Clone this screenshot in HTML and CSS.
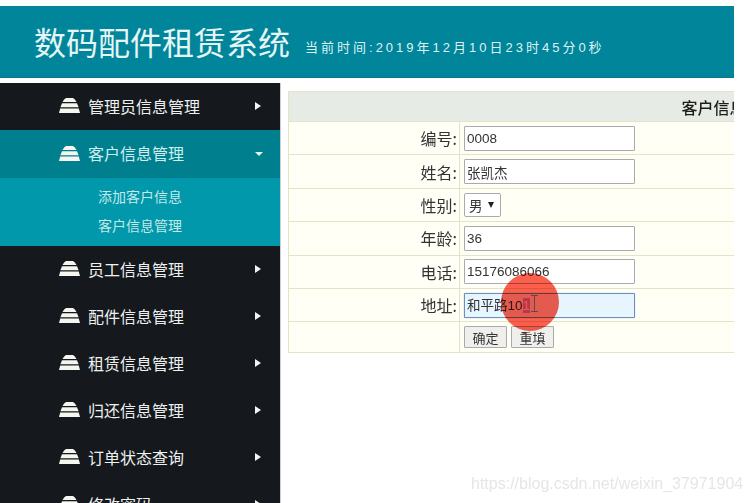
FILE: index.html
```html
<!DOCTYPE html>
<html lang="zh-CN">
<head>
    <meta charset="UTF-8">
    <title>数码配件租赁系统</title>
    <link rel="stylesheet" href="styles.css">
</head>
<body>
    <!-- shared icon -->
    <svg class="defs" width="0" height="0">
        <symbol id="stack" viewBox="0 0 21 15">
            <path d="M7 0H14Q16 1 17.5 4H3.5Q5 1 7 0Z"/>
            <path d="M3 5.2H18L19.6 9.2H1.4Z"/>
            <path d="M1.2 10.4H19.8L21 15H0Z"/>
        </symbol>
    </svg>

    <div class="page">
        <!-- Header -->
        <header class="top">
            <h1>数码配件租赁系统</h1>
            <span class="clock">当前时间:2019年12月10日23时45分0秒</span>
        </header>

        <div class="content">
            <!-- Side menu -->
            <nav class="menu">
                <a class="menu-item"><svg class="stack"><use href="#stack"/></svg><span>管理员信息管理</span><i class="arrow"></i></a>
                <a class="menu-item active"><svg class="stack"><use href="#stack"/></svg><span>客户信息管理</span><i class="arrow-down"></i></a>
                <div class="submenu">
                    <a>添加客户信息</a>
                    <a>客户信息管理</a>
                </div>
                <a class="menu-item"><svg class="stack"><use href="#stack"/></svg><span>员工信息管理</span><i class="arrow"></i></a>
                <a class="menu-item"><svg class="stack"><use href="#stack"/></svg><span>配件信息管理</span><i class="arrow"></i></a>
                <a class="menu-item"><svg class="stack"><use href="#stack"/></svg><span>租赁信息管理</span><i class="arrow"></i></a>
                <a class="menu-item"><svg class="stack"><use href="#stack"/></svg><span>归还信息管理</span><i class="arrow"></i></a>
                <a class="menu-item"><svg class="stack"><use href="#stack"/></svg><span>订单状态查询</span><i class="arrow"></i></a>
                <a class="menu-item"><svg class="stack"><use href="#stack"/></svg><span>修改密码</span><i class="arrow"></i></a>
            </nav>

            <!-- Customer form -->
            <main class="main">
                <table class="form-table">
                    <colgroup><col class="col-label"><col></colgroup>
                    <tr><th colspan="2" class="title">客户信息修改</th></tr>
                    <tr><td class="label">编号:</td><td><input class="field" type="text" value="0008"></td></tr>
                    <tr><td class="label">姓名:</td><td><input class="field" type="text" value="张凯杰"></td></tr>
                    <tr><td class="label">性别:</td><td><span class="select">男<i class="select-arrow"></i></span></td></tr>
                    <tr><td class="label">年龄:</td><td><input class="field" type="text" value="36"></td></tr>
                    <tr><td class="label">电话:</td><td><input class="field" type="text" value="15176086066"></td></tr>
                    <tr><td class="label">地址:</td><td><div class="field focused">和平路10<span class="picked">1</span></div></td></tr>
                    <tr class="last"><td class="label"></td><td><button class="btn">确定</button><button class="btn">重填</button></td></tr>
                </table>
                <!-- screen recorder click marker -->
                <div class="click-mark"></div>
                <svg class="ibeam" width="9" height="17" viewBox="0 0 9 17"><path d="M1 .5H8M4.5 .5V16.5M1 16.5H8" fill="none" stroke="#5a4a4a"/></svg>
            </main>
        </div>
    </div>

    <div class="watermark">https://blog.csdn.net/weixin_37971904</div>
</body>
</html>
```

FILE: styles.css
```css
/* Basic Reset */
* {
    margin: 0;
    padding: 0;
    box-sizing: border-box;
}

html, body {
    height: 503px;
    overflow: hidden;
}

body {
    position: relative;
    background-color: #fff;
    font-family: "Liberation Sans", "Noto Sans CJK SC", sans-serif;
    color: #222;
}

.defs {
    position: absolute;
}

/* the source is a video frame, so everything is a little soft */
.page {
    width: 734px;
    padding-top: 6px;
    filter: blur(0.35px);
}

/* Header */
.top {
    height: 72px;
    display: flex;
    align-items: center;
    padding-left: 34px;
    background-color: #00859a;
    border-bottom: 1px solid #0a7889;
    color: #dff3f3;
}

.top h1 {
    font-family: "Noto Sans CJK SC", sans-serif;
    font-size: 32px;
    font-weight: 400;
    margin-top: -2px;
    color: #e6f5f5;
}

.clock {
    margin-left: 15px;
    margin-top: 9px;
    font-size: 13px;
    letter-spacing: 3px;
}

.content {
    display: flex;
    margin-top: 5px;
    height: 420px;
}

/* Side menu */
.menu {
    width: 281px;
    flex-shrink: 0;
    background-color: #15191d;
    border-right: 1px solid #c9cfcf;
    overflow: hidden;
    font-family: "Noto Sans CJK SC", sans-serif;
}

.menu-item {
    height: 47px;
    display: flex;
    align-items: center;
    padding-left: 59px;
    padding-right: 19px;
    padding-bottom: 2px;
    font-size: 16px;
    color: #eef0ef;
}

.menu-item.active {
    height: 48px;
    background-color: #00808f;
    color: #cfeeee;
}

.stack {
    width: 21px;
    height: 15px;
    margin-right: 8px;
    fill: #f4f6ef;
}

.arrow {
    margin-left: auto;
    border-left: 6px solid #f4f6f4;
    border-top: 4.5px solid transparent;
    border-bottom: 4.5px solid transparent;
}

.arrow-down {
    margin-left: auto;
    margin-right: -2px;
    margin-top: 2px;
    border-top: 4px solid #e4f4f4;
    border-left: 4px solid transparent;
    border-right: 4px solid transparent;
}

.submenu {
    height: 68px;
    padding-top: 4px;
    background-color: #0098aa;
    text-align: center;
    font-size: 14px;
    color: #c5e8e8;
}

.submenu a {
    display: block;
    height: 29px;
    line-height: 29px;
}

/* Main form */
.main {
    position: relative;
    flex: 1;
    padding: 8px 0 0 7px;
    overflow: hidden;
}

.form-table {
    width: 882px;
    border-collapse: collapse;
    table-layout: fixed;
    background-color: #fffff6;
    border: 1px solid #e2e4c8;
}

.col-label {
    width: 171px;
}

.form-table td, .form-table th {
    border: 1px solid #e2e4c8;
    height: 33.4px;
    padding: 0 3px 0 4px;
    font-weight: 400;
}

.form-table .title {
    height: 30px;
    background-color: #e7ebe5;
    text-align: center;
    font-family: "Noto Sans CJK SC", sans-serif;
    font-size: 16px;
    font-weight: 500;
    color: #1c1c1c;
}

.form-table .last td {
    height: 31px;
}

.form-table .label {
    padding-right: 2px;
    text-align: right;
    font-family: "Noto Sans CJK SC", sans-serif;
    font-size: 16px;
    color: #333;
}

.field {
    display: block;
    width: 171px;
    height: 25px;
    padding: 0 2px;
    border: 1px solid #aaa;
    border-radius: 1px;
    background-color: #fff;
    font-family: "Liberation Sans", "Noto Sans CJK SC", sans-serif;
    font-size: 13.5px;
    line-height: 23px;
    color: #333;
}

.focused {
    border: 1px solid #6b8fc0;
    background-color: #e6f5ff;
    box-shadow: 0 0 1px #6b8fc0;
}

/* sits under the multiply circle, so it is lighter than it ends up */
.picked {
    background-color: #b49bff;
    color: #ffd8ff;
}

.select {
    display: inline-flex;
    align-items: center;
    width: 37px;
    height: 24px;
    padding-left: 4px;
    border: 1px solid #aaa;
    border-radius: 2px;
    background-color: #fff;
    font-family: "Noto Sans CJK SC", sans-serif;
    font-size: 13.5px;
    color: #333;
    vertical-align: middle;
}

.select-arrow {
    margin-left: 5px;
    border-top: 6px solid #222;
    border-left: 3px solid transparent;
    border-right: 3px solid transparent;
}

.btn {
    width: 43px;
    height: 22px;
    margin-right: 4px;
    border: 1px solid #aaa;
    border-radius: 1px;
    background-color: #efefeb;
    font-family: "Noto Sans CJK SC", sans-serif;
    font-size: 13px;
    color: #333;
    vertical-align: middle;
}

.click-mark {
    position: absolute;
    left: 220px;
    top: 190px;
    width: 58px;
    height: 58px;
    border-radius: 50%;
    background-color: #fb5f4e;
    mix-blend-mode: multiply;
}

.ibeam {
    position: absolute;
    left: 249px;
    top: 212px;
}

.watermark {
    position: absolute;
    left: 471px;
    top: 475px;
    font-size: 16px;
    white-space: nowrap;
    color: #e6e6e6;
}
```
